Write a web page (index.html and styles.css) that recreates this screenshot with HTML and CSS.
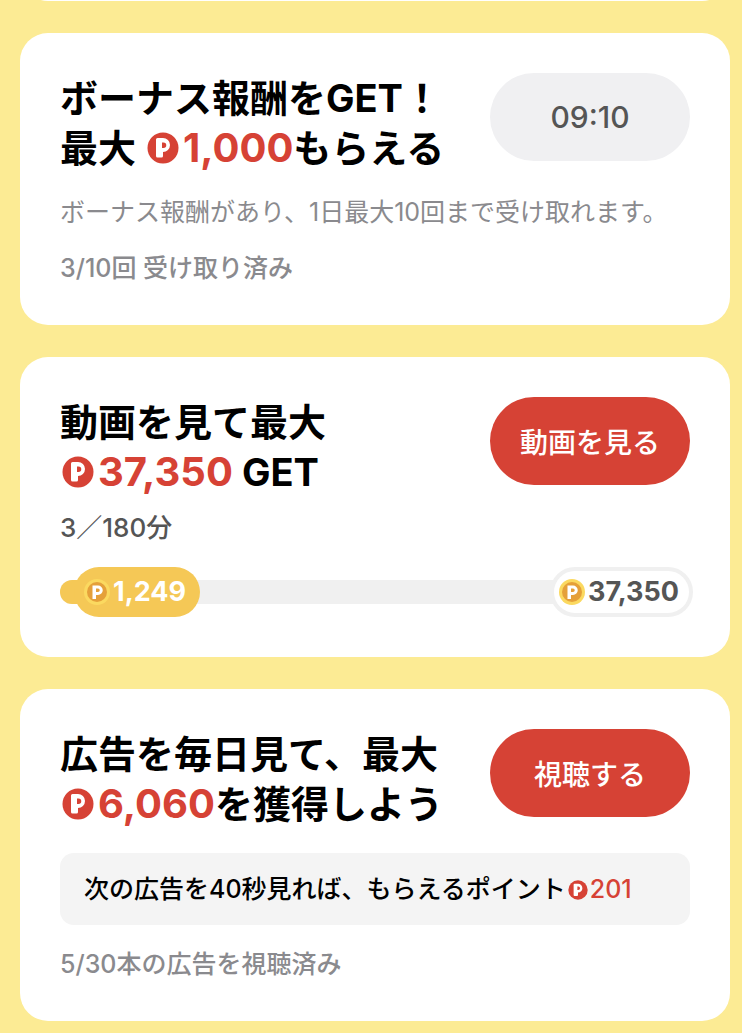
FILE: index.html
```html
<!doctype html>
<html lang="ja">
    <head>
        <meta charset="UTF-8" />
        <meta name="viewport" content="width=device-width, initial-scale=1.0" />
        <title>ポイント</title>
        <link rel="stylesheet" href="styles.css">
    </head>
    <body>
        <!-- Shared point icons -->
        <svg class="sprite" aria-hidden="true">
            <symbol id="point" viewBox="0 0 32 32">
                <circle cx="16" cy="16" r="15.500" fill="#d64235" />
                <path
                    fill="#fff"
                    fill-rule="evenodd"
                    d="M10.500 6H16a7 7 0 0 1 0 14v4a1.500 1.500 0 0 1-1.500 1.500h-4A1.500 1.500 0 0 1 9 24V7.500A1.500 1.500 0 0 1 10.500 6zM15 10.500v5.500h1.500a2.750 2.750 0 0 0 0-5.500z"
                />
            </symbol>
            <symbol id="coin" viewBox="0 0 26 26">
                <circle cx="13" cy="13" r="13" fill="#fbd960" />
                <circle cx="13" cy="13" r="10" fill="#e5a03a" />
                <path
                    fill="#fff"
                    fill-rule="evenodd"
                    d="M8.500 6.500h5.500a4.750 4.750 0 0 1 0 9.500H12v4H8.500zM12 9.500v3.500h2a1.750 1.750 0 0 0 0-3.500z"
                />
            </symbol>
        </svg>

        <main class="list">
            <div class="card card-prev"></div>

            <!-- Bonus -->
            <section class="card">
                <div class="card-head">
                    <h2>
                        ボーナス報酬をGET！<br />
                        最大 <span class="points"><svg class="icon"><use href="#point" /></svg>1,000</span>もらえる
                    </h2>
                    <button class="btn btn-wait" disabled>09:10</button>
                </div>
                <p class="note">ボーナス報酬があり、1日最大10回まで受け取れます。</p>
                <p class="note status">3/10回 受け取り済み</p>
            </section>

            <!-- Video -->
            <section class="card">
                <div class="card-head">
                    <h2>
                        動画を見て最大<br />
                        <span class="points"><svg class="icon"><use href="#point" /></svg>37,350</span> GET
                    </h2>
                    <button class="btn">動画を見る</button>
                </div>
                <p class="minutes">3／180分</p>
                <div class="progress">
                    <div class="track">
                        <div class="fill" style="width: 8%"></div>
                    </div>
                    <div class="marks">
                        <span class="mark mark-now"><svg class="coin"><use href="#coin" /></svg>1,249</span>
                        <span class="mark mark-goal"><svg class="coin"><use href="#coin" /></svg>37,350</span>
                    </div>
                </div>
            </section>

            <!-- Ads -->
            <section class="card">
                <div class="card-head">
                    <h2>
                        広告を毎日見て、最大<br />
                        <span class="points"><svg class="icon"><use href="#point" /></svg>6,060</span>を獲得しよう
                    </h2>
                    <button class="btn">視聴する</button>
                </div>
                <p class="next">次の広告を40秒見れば、もらえるポイント<span class="points"><svg class="icon"><use href="#point" /></svg>201</span></p>
                <p class="note status">5/30本の広告を視聴済み</p>
            </section>
        </main>
    </body>
</html>
```

FILE: styles.css
```css
* {
    box-sizing: border-box;
}

body {
    margin: 0;
    background: #fceb94;
    color: #000;
    font-family: Inter, "Noto Sans CJK JP", sans-serif;
    font-size: 25px;
    line-height: 34px;
}

.sprite {
    display: none;
}

.list {
    display: flex;
    flex-direction: column;
    gap: 32px;
    padding: 0 12px 12px 20px;
    overflow: hidden;
}

.card {
    padding: 40px;
    background: #fff;
    border-radius: 28px;
}

/* card scrolled off the top of the list */
.card-prev {
    margin-top: -79px;
}

.card-head {
    display: flex;
    justify-content: space-between;
    align-items: flex-start;
}

h2 {
    margin: 0;
    font-size: 38px;
    font-weight: 700;
    line-height: 50px;
    white-space: nowrap;
}

.points {
    color: #d64235;
}

h2 .points {
    font-size: 40px;
    line-height: 40px;
}

.icon {
    width: 32px;
    height: 32px;
    margin: 0 4px 0 2px;
    vertical-align: -2px;
}

.btn {
    flex: none;
    width: 200px;
    height: 88px;
    padding: 0;
    border: none;
    border-radius: 44px;
    background: #d64235;
    color: #fff;
    font-family: inherit;
    font-size: 28px;
    font-weight: 500;
    cursor: pointer;
}

.btn-wait {
    background: #f0f0f2;
    color: #555;
    font-size: 30px;
    cursor: default;
}

p {
    margin: 22px 0 0;
}

.note {
    color: #8a8a8e;
}

.status {
    font-weight: 500;
}

.minutes {
    margin-top: 14px;
    color: #555;
    font-size: 26px;
    font-weight: 500;
}

.progress {
    display: grid;
    align-items: center;
    margin-top: 22px;
}

.track,
.marks {
    grid-area: 1 / 1;
}

.track {
    height: 24px;
    border-radius: 12px;
    background: #f0f0f0;
    overflow: hidden;
}

.fill {
    height: 100%;
    background: #f5c856;
}

.marks {
    display: flex;
    justify-content: space-between;
    margin: 0 -3px 0 14px;
}

.mark {
    display: flex;
    align-items: center;
    gap: 3px;
    height: 50px;
    padding: 0 14px 0 10px;
    border-radius: 25px;
    font-size: 27px;
    font-weight: 700;
}

.mark-now {
    background: #f5c856;
    color: #fff;
}

.mark-goal {
    padding: 0 10px 0 5px;
    border: 4px solid #f0f0f0;
    background: #fff;
    color: #555;
}

.coin {
    width: 26px;
    height: 26px;
}

.next {
    margin-top: 24px;
    padding: 19px 24px;
    border-radius: 14px;
    background: #f4f4f4;
    font-weight: 500;
}

.next .icon {
    width: 20px;
    height: 20px;
    margin: 0 2px;
}
```
